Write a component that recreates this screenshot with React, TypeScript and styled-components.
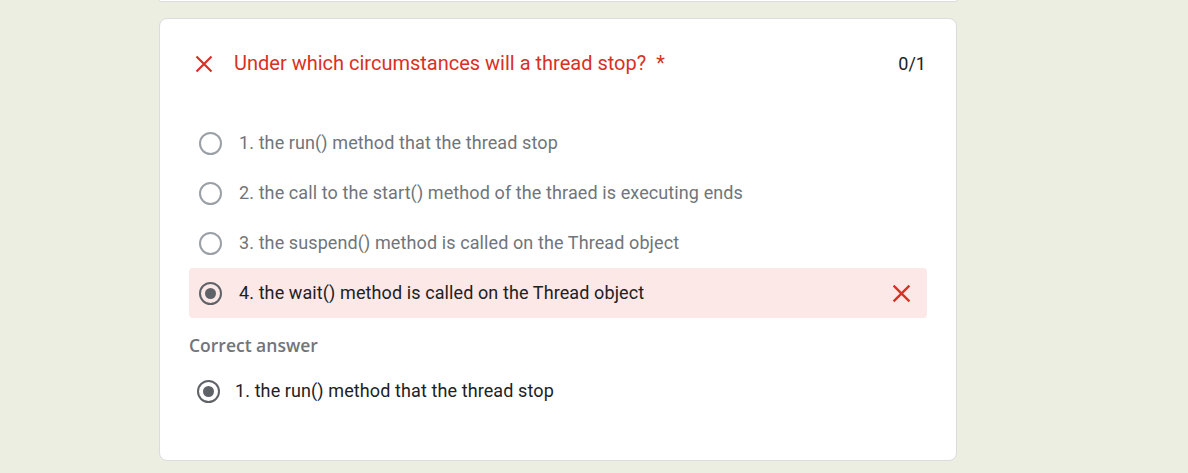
import React from 'react';
import styled, { createGlobalStyle } from 'styled-components';

const GlobalStyle = createGlobalStyle`
  html, body {
    margin: 0;
    padding: 0;
    background: #ebeee1;
    font-family: Roboto, "Liberation Sans", Arial, sans-serif;
  }
`;

const Page = styled.div`
  height: 473px;
  overflow: hidden;
  padding-left: 159px;
`;

const Column = styled.div`
  display: flex;
  flex-direction: column;
  gap: 16px;
  width: 798px;
`;

const PrevCardEdge = styled.div`
  height: 1px;
  background: #fff;
  border: 1px solid #dadce0;
  border-top: none;
  border-radius: 0 0 8px 8px;
`;

const Card = styled.div`
  background: #fff;
  border: 1px solid #dadce0;
  border-radius: 8px;
  padding: 31px 29px 44px 29px;
`;

const TitleRow = styled.div`
  display: flex;
  align-items: center;
  height: 28px;
`;

const TitleIcon = styled.span`
  display: flex;
  margin-left: 6px;
  margin-right: 21px;
`;

const Title = styled.div`
  flex: 1;
  color: #d93025;
  font-size: 20px;
  padding-bottom: 2px;
`;

const Asterisk = styled.span`
  margin-left: 10px;
`;

const Score = styled.div`
  color: #202124;
  font-size: 18px;
  margin-right: 1px;
  padding-bottom: 1px;
`;

const Options = styled.div`
  display: flex;
  flex-direction: column;
  margin-top: 40px;
`;

const OptionRow = styled.div<{ $wrong?: boolean; $inset?: number }>`
  display: flex;
  align-items: center;
  height: 50px;
  padding-left: ${p => p.$inset ?? 10}px;
  padding-right: 16px;
  border-radius: 4px;
  background: ${p => (p.$wrong ? '#fce8e6' : 'transparent')};
`;

const Radio = styled.span<{ $checked?: boolean }>`
  box-sizing: border-box;
  width: 23px;
  height: 23px;
  flex: none;
  border-radius: 50%;
  border: 2px solid ${p => (p.$checked ? '#5f6368' : '#9aa0a6')};
  display: flex;
  align-items: center;
  justify-content: center;
  &::after {
    content: '';
    width: 11px;
    height: 11px;
    border-radius: 50%;
    background: ${p => (p.$checked ? '#5f6368' : 'transparent')};
  }
`;

const OptionText = styled.span<{ $dark?: boolean; $gap?: number }>`
  flex: 1;
  margin-left: ${p => p.$gap ?? 17}px;
  padding-bottom: 2px;
  font-size: 18px;
  letter-spacing: 0.1px;
  color: ${p => (p.$dark ? '#202124' : '#70757a')};
`;

const Label = styled.div`
  margin-top: 17px;
  height: 20px;
  line-height: 20px;
  font-family: "Open Sans", Roboto, sans-serif;
  font-size: 17.5px;
  font-weight: 600;
  color: #70757a;
`;

const Answer = styled.div`
  margin-top: 11px;
`;

const Cross = ({ size }: { size: number }) => (
  <svg width={size} height={size} viewBox="0 0 18 18" fill="none">
    <path d="M1.5 1.5L16.5 16.5M16.5 1.5L1.5 16.5" stroke="#d93025" strokeWidth="2.2" />
  </svg>
);

const options = [
  '1. the run() method that the thread stop',
  '2. the call to the start() method of the thraed is executing ends',
  '3. the suspend() method is called on the Thread object',
  '4. the wait() method is called on the Thread object',
];
const chosen = 3;

export default function App() {
  return (
    <>
      <GlobalStyle />
      <Page>
        <Column>
          <PrevCardEdge />
          <Card>
            <TitleRow>
              <TitleIcon>
                <Cross size={18} />
              </TitleIcon>
              <Title>
                Under which circumstances will a thread stop?<Asterisk>*</Asterisk>
              </Title>
              <Score>0/1</Score>
            </TitleRow>
            <Options>
              {options.map((o, i) => (
                <OptionRow key={o} $wrong={i === chosen}>
                  <Radio $checked={i === chosen} />
                  <OptionText $dark={i === chosen}>{o}</OptionText>
                  {i === chosen && <Cross size={19} />}
                </OptionRow>
              ))}
            </Options>
            <Label>Correct answer</Label>
            <Answer>
              <OptionRow $inset={8}>
                <Radio $checked />
                <OptionText $dark $gap={15}>
                  {options[0]}
                </OptionText>
              </OptionRow>
            </Answer>
          </Card>
        </Column>
      </Page>
    </>
  );
}
